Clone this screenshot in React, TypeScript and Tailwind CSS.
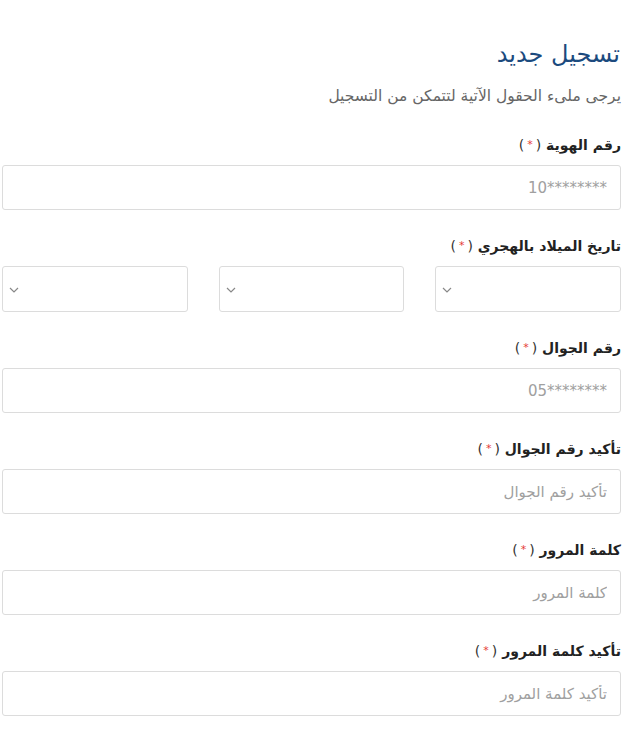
import React from "react";

const font = { fontFamily: '"DejaVu Sans", "Noto Sans", sans-serif' };

function Label({ text }: { text: string }) {
  return (
    <label className="block text-[14px] font-bold text-[#222] leading-[20px] mb-[10px]">
      {text} <span className="font-normal text-[#333]">(<span className="text-[#e53935] text-[11px] align-top px-[3px]">*</span>)</span>
    </label>
  );
}

function Field({ label, placeholder, ltr }: { label: string; placeholder: string; ltr?: boolean }) {
  return (
    <div className="mb-[26px]">
      <Label text={label} />
      <input
        dir={ltr ? "ltr" : "rtl"}
        placeholder={placeholder}
        className="block w-full h-[45px] border border-[#dcdcdc] rounded-[3px] px-[13px] text-right text-[15px] text-[#555] placeholder:text-[#a0a0a0] outline-none"
      />
    </div>
  );
}

function Select() {
  return (
    <div className="relative h-[46px] border border-[#dcdcdc] rounded-[3px] bg-white">
      <svg className="absolute left-[6px] top-[20px]" width="10" height="6" viewBox="0 0 10 6" fill="none">
        <path d="M1 1l4 4 4-4" stroke="#888" strokeWidth="1.2" />
      </svg>
    </div>
  );
}

export default function App() {
  return (
    <div dir="rtl" style={font} className="w-[628px] h-[732px] bg-white pr-[7px] pl-[2px] pt-[38px] overflow-hidden">
      <h1 className="text-[24px] leading-[32px] text-[#1b4a7e] font-normal pr-[1px]">تسجيل جديد</h1>
      <p className="mt-[16px] text-[15.5px] text-[#666] leading-[20px]">يرجى ملىء الحقول الآتية لتتمكن من التسجيل</p>

      <div className="mt-[29px]">
        <Field label="رقم الهوية" placeholder="10********" ltr />

        <div className="mb-[26px]">
          <Label text="تاريخ الميلاد بالهجري" />
          <div className="grid grid-cols-3 gap-[31px]">
            <Select />
            <Select />
            <Select />
          </div>
        </div>

        <Field label="رقم الجوال" placeholder="05********" ltr />
        <Field label="تأكيد رقم الجوال" placeholder="تأكيد رقم الجوال" />
        <Field label="كلمة المرور" placeholder="كلمة المرور" />
        <Field label="تأكيد كلمة المرور" placeholder="تأكيد كلمة المرور" />
      </div>
    </div>
  );
}
